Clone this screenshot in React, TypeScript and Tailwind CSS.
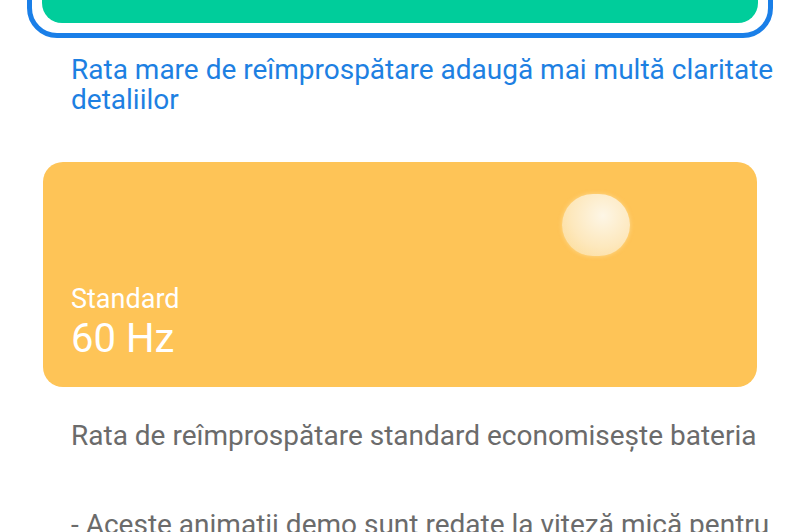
import React from 'react';

const font = { fontFamily: 'Roboto, "Noto Sans", sans-serif' };

export default function App() {
  return (
    <div className="w-[800px] h-[532px] overflow-hidden bg-white" style={font}>
      {/* selected option card, mostly scrolled out of view */}
      <div className="mx-[27px] mt-[-100px] h-[138px] rounded-[30px] border-[5px] border-[#1a7fe8] p-[10px]">
        <div className="h-full rounded-[20px] bg-[#00cd9b]" />
      </div>

      <p className="mt-[17px] pl-[71px] pr-[20px] text-[28px] leading-[30px] text-[#1d80e2]">
        Rata mare de reîmprospătare adaugă mai multă claritate detaliilor
      </p>

      <div className="mx-[43px] mt-[47px] h-[225px] rounded-[20px] bg-[#fec457] relative flex flex-col justify-end px-[28px] pb-[24px]">
        <div className="absolute left-[519px] top-[32px] h-[62px] w-[68px] rounded-full bg-[radial-gradient(circle_at_60%_35%,#fdf6e6_0%,#fde8bd_55%,#fcd98f_100%)] shadow-[0_0_4px_rgba(255,240,200,0.5)]" />
        <div className="text-[27px] leading-[32px] text-white">Standard</div>
        <div className="text-[40px] leading-[48px] text-white">60 Hz</div>
      </div>

      <p className="mt-[33px] pl-[71px] pr-[20px] text-[28px] leading-[32px] text-[#6b6b6b]">
        Rata de reîmprospătare standard economisește bateria
      </p>

      <p className="mt-[57px] pl-[71px] pr-[20px] text-[28px] leading-[32px] text-[#6b6b6b]">
        - Aceste animatii demo sunt redate la viteză mică pentru
      </p>
    </div>
  );
}
